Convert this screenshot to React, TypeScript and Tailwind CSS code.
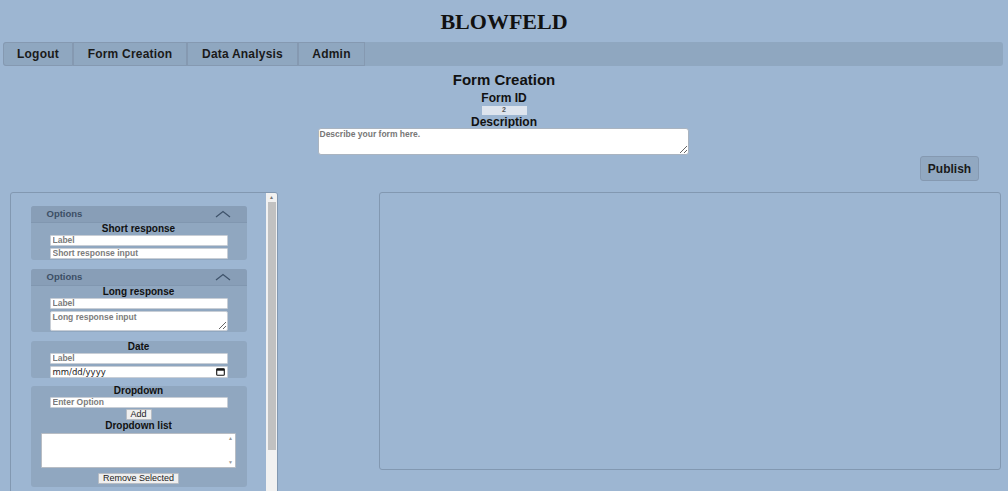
import React from 'react';

const sans = { fontFamily: '"Liberation Sans", Arial, sans-serif' };

function Chevron() {
  return (
    <svg width="16" height="8" viewBox="0 0 16 8" className="mr-[16px]">
      <polyline points="1,7 8,1.5 15,7" fill="none" stroke="#3f536b" strokeWidth="1.3" />
    </svg>
  );
}

function OptionsHeader() {
  return (
    <div className="flex h-[17px] items-center justify-between border-b border-[#8197b0] bg-[#889eb7] pl-[16px]">
      <span className="text-[9.5px] font-bold text-[#3c4f66]">Options</span>
      <Chevron />
    </div>
  );
}

function SmallInput({ placeholder }: { placeholder: string }) {
  return (
    <input
      placeholder={placeholder}
      className="mx-auto block h-[11px] w-[178px] rounded-[1px] border border-[#c8ced6] bg-white px-[2px] text-[8.5px] font-bold text-[#333] placeholder:text-[#7c7c7c] outline-none"
    />
  );
}

function CardTitle({ children }: { children: React.ReactNode }) {
  return <div className="text-center text-[10px] font-bold leading-[10px] text-[#111]">{children}</div>;
}

export default function App() {
  return (
    <div className="min-h-[491px] bg-[#9db6d2] text-[#111]" style={sans}>
      {/* Title */}
      <div
        className="pt-[9px] text-center text-[22px] font-bold leading-[25px] text-[#111]"
        style={{ fontFamily: '"Liberation Serif", "Times New Roman", serif' }}
      >
        BLOWFELD
      </div>

      {/* Nav */}
      <div className="ml-[3px] mr-[5px] mt-[8px] flex h-[24px] rounded-[3px] bg-[#8fa7c0]">
        {['Logout', 'Form Creation', 'Data Analysis', 'Admin'].map((item, i) => (
          <button
            key={item}
            className={`h-full border border-[#8599b1] text-[12px] font-bold tracking-[0.2px] text-[#1a1a1a] ${
              i === 0 ? 'w-[70px] rounded-l-[3px]' : i === 1 ? 'w-[114px]' : i === 2 ? 'w-[111px]' : 'w-[67px]'
            }`}
          >
            {item}
          </button>
        ))}
      </div>

      {/* Form header */}
      <div className="mt-[5px] flex flex-col items-center">
        <div className="text-[15px] font-bold leading-[17px]">Form Creation</div>
        <div className="mt-[4px] text-[12px] font-bold leading-[13px]">Form ID</div>
        <div className="mt-[1px] flex h-[9px] w-[45px] items-center justify-center bg-[#dde4ee] text-[7px] font-bold text-[#555]">
          2
        </div>
        <div className="mt-[1px] text-[12px] font-bold leading-[12px]">Description</div>
        <textarea
          placeholder="Describe your form here."
          className="-ml-[2px] h-[27px] w-[371px] rounded-[3px] border border-[#aab4c0] bg-white px-[1px] py-0 text-[8.5px] font-bold leading-[11px] placeholder:text-[#777] outline-none"
        />
      </div>

      {/* Publish */}
      <div className="flex justify-end pr-[29px]">
        <button className="mt-[1px] h-[25px] w-[59px] rounded-[3px] border border-[#8599b1] bg-[#91a8c1] text-[12px] font-bold text-[#1a1a1a]">
          Publish
        </button>
      </div>

      {/* Panels */}
      <div className="mt-[11px] flex pl-[10px] pr-[7px]">
        <div className="flex h-[305px] w-[268px] overflow-hidden rounded-[3px] border border-[#8298b1]">
          <div className="flex flex-1 flex-col items-center pt-[13px]">
            {/* Short response */}
            <div className="w-[216px] overflow-hidden rounded-[3px] bg-[#90a7c0] pb-[1px]">
              <OptionsHeader />
              <div className="mt-[1px]">
                <CardTitle>Short response</CardTitle>
              </div>
              <div className="mt-[1px] flex flex-col gap-[2px]">
                <SmallInput placeholder="Label" />
                <SmallInput placeholder="Short response input" />
              </div>
            </div>

            {/* Long response */}
            <div className="mt-[9px] w-[216px] overflow-hidden rounded-[3px] bg-[#90a7c0] pb-[1px]">
              <OptionsHeader />
              <div className="mt-[1px]">
                <CardTitle>Long response</CardTitle>
              </div>
              <div className="mt-[1px] flex flex-col gap-[2px]">
                <SmallInput placeholder="Label" />
                <textarea
                  placeholder="Long response input"
                  className="mx-auto block h-[20px] w-[178px] rounded-[2px] border border-[#c8ced6] bg-white px-[2px] py-0 text-[8.5px] font-bold leading-[10px] placeholder:text-[#7c7c7c] outline-none"
                />
              </div>
            </div>

            {/* Date */}
            <div className="mt-[9px] w-[216px] rounded-[3px] bg-[#90a7c0] pt-[1px]">
              <CardTitle>Date</CardTitle>
              <div className="mt-[1px] flex flex-col gap-[2px]">
                <SmallInput placeholder="Label" />
                <div className="mx-auto flex h-[12px] w-[178px] items-center justify-between rounded-[1px] border border-[#c8ced6] bg-white px-[2px]">
                  <span className="text-[8.5px] text-[#222]" style={{ fontFamily: '"DejaVu Sans", sans-serif' }}>
                    mm/dd/yyyy
                  </span>
                  <svg width="9" height="8" viewBox="0 0 9 8">
                    <rect x="0.7" y="0.7" width="7.6" height="6.6" rx="0.8" fill="none" stroke="#111" strokeWidth="1.1" />
                    <rect x="0.7" y="0.7" width="7.6" height="2" fill="#111" />
                  </svg>
                </div>
              </div>
            </div>

            {/* Dropdown */}
            <div className="mt-[8px] w-[216px] rounded-[3px] bg-[#90a7c0] pb-[3px]">
              <CardTitle>Dropdown</CardTitle>
              <div className="mt-[1px]">
                <SmallInput placeholder="Enter Option" />
              </div>
              <div className="mt-[1px] flex justify-center">
                <button className="h-[11px] w-[26px] rounded-[1px] border border-[#b8bdc4] bg-[#efefef] text-[9px] leading-[9px] text-[#222]">
                  Add
                </button>
              </div>
              <div className="mt-[1px]">
                <CardTitle>Dropdown list</CardTitle>
              </div>
              <div className="mx-auto mt-[2px] flex h-[35px] w-[195px] justify-end rounded-[1px] border border-[#b8bdc4] bg-white">
                <div className="flex w-[9px] flex-col items-center justify-between py-[2px] text-[5px] leading-[5px] text-[#999]">
                  <span>▲</span>
                  <span>▼</span>
                </div>
              </div>
              <div className="mt-[5px] flex justify-center">
                <button className="h-[11px] w-[81px] rounded-[1px] border border-[#b8bdc4] bg-[#efefef] text-[9px] leading-[9px] text-[#222]">
                  Remove Selected
                </button>
              </div>
            </div>
          </div>

          {/* Scrollbar */}
          <div className="flex w-[11px] flex-col items-center bg-[#f1f1f1]">
            <span className="mt-[1px] text-[5px] leading-[7px] text-[#777]">▲</span>
            <div className="mt-[1px] h-[248px] w-[8px] bg-[#c1c1c1]" />
          </div>
        </div>

        <div className="ml-[101px] h-[278px] flex-1 rounded-[3px] border border-[#8298b1]" />
      </div>
    </div>
  );
}
